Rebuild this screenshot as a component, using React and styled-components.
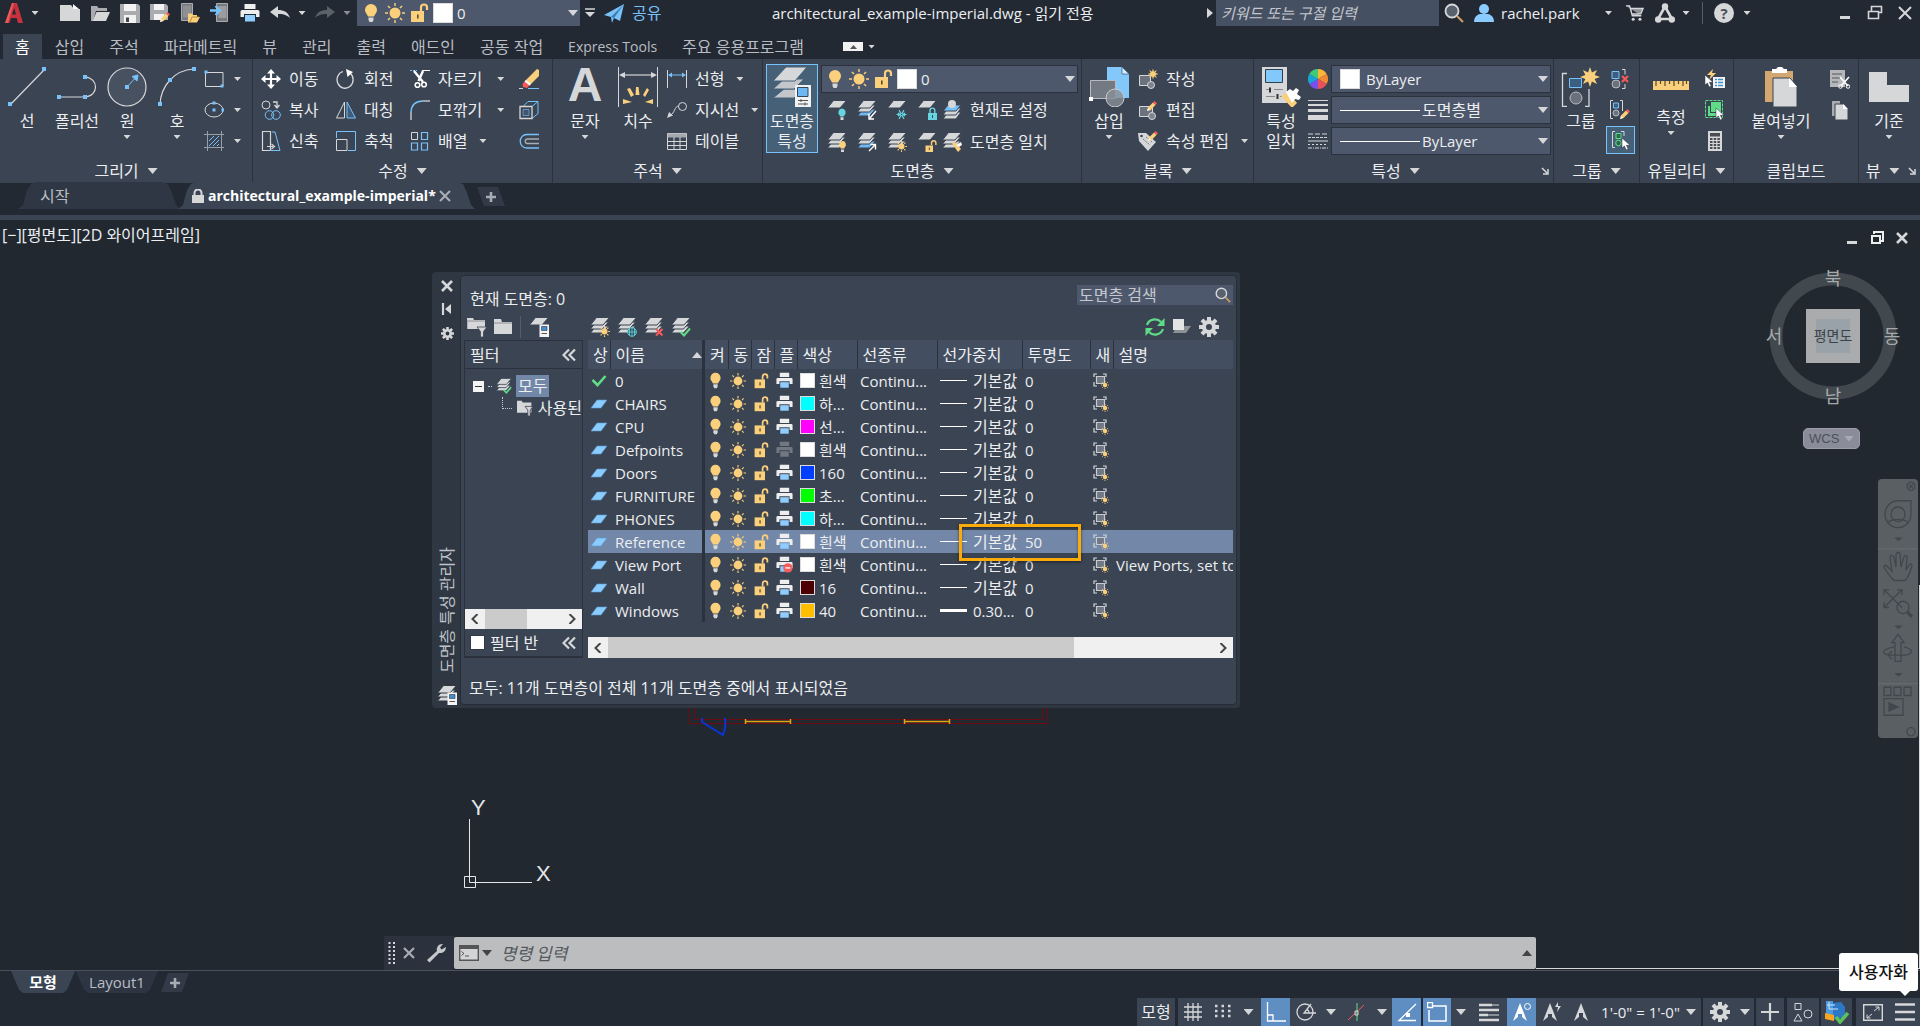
import { useState } from "react";
import styled, { createGlobalStyle, css } from "styled-components";

const c = {
  bar: "#222933",
  canvas: "#212830",
  panel: "#3b4453",
  field: "#4d586c",
  head: "#444e61",
  line: "#2b323d",
  text: "#eceef0",
  dim: "#b9bdc3",
  gray: "#d6d7d9",
  blue: "#78c2fb",
  yellow: "#fbd07c",
  teal: "#66d5e0",
  green: "#5fdc86",
  red: "#fa5a5a",
  select: "#7388a8",
};

const GlobalStyle = createGlobalStyle`
  * { box-sizing: border-box; }
  body {
    margin: 0;
    background: ${c.bar};
    color: ${c.text};
    font-family: "Open Sans", "Noto Sans CJK KR", sans-serif;
    font-size: 15px;
    line-height: 20px;
  }
  button, input, select {
    font: inherit;
    color: inherit;
    background: none;
    border: 0;
    padding: 0;
    margin: 0;
  }
  button { white-space: nowrap; cursor: pointer; }
`;

/* ---------- icons ---------- */
const Icon = ({ size = 20, h, box = 20, boxH, children }) => (
  <svg
    width={size}
    height={h || size}
    viewBox={`0 0 ${box} ${boxH || box}`}
    fill="none"
    stroke="none"
    aria-hidden="true"
    style={{ flex: "none", display: "block" }}
  >
    {children}
  </svg>
);

const rays = (cx, cy, r1, r2, n = 8) =>
  Array.from({ length: n }, (_, i) => {
    const a = (i * 2 * Math.PI) / n;
    return `M${cx + r1 * Math.cos(a)} ${cy + r1 * Math.sin(a)}L${cx + r2 * Math.cos(a)} ${cy + r2 * Math.sin(a)}`;
  }).join("");

const starPath = (cx, cy, r1, r2, n = 8) =>
  Array.from({ length: n * 2 }, (_, i) => {
    const a = (i * Math.PI) / n;
    const r = i % 2 ? r2 : r1;
    return `${i ? "L" : "M"}${cx + r * Math.cos(a)} ${cy + r * Math.sin(a)}`;
  }).join("") + "Z";

const Bulb = ({ size = 20 }) => (
  <Icon size={size}>
    <path d="M10 1a6 6 0 0 0-6 6c0 2.600 2 3.800 3 6.500h6c1-2.700 3-3.900 3-6.500a6 6 0 0 0-6-6z" fill={c.yellow} />
    <path d="M7.500 14.500h5v2.500l-1 2h-3l-1-2z" fill={c.gray} />
  </Icon>
);
const Sun = ({ size = 20 }) => (
  <Icon size={size}>
    <circle cx="10" cy="10" r="5.500" fill={c.yellow} />
    <path d={rays(10, 10, 7, 10)} stroke={c.yellow} strokeWidth="1.400" />
  </Icon>
);
const Unlock = ({ size = 20 }) => (
  <Icon size={size}>
    <path d="M2 8h13v11H2z" fill={c.yellow} />
    <path d="M12 8V4.500a3 3 0 0 1 6 0V7" stroke={c.yellow} strokeWidth="2.200" />
    <path d="M8 11.500h1.600v4H8z" fill="#5b4a2c" />
  </Icon>
);
const Printer = ({ size = 20, off, ban }) => (
  <Icon size={size}>
    <g opacity={off ? 0.45 : 1}>
      <path d="M4.500 1h11v5h-11zM2 7h16q1.500 0 1.500 1.500V14H16v-3H4v3H.500V8.500Q.500 7 2 7z" fill={off ? "#b5b8bc" : "#eee"} />
      <path d="M5 12h10v6.500H5z" fill={off ? "#b5b8bc" : "#8fccff"} />
    </g>
    {ban && (
      <g>
        <circle cx="14" cy="14" r="5.500" fill="#f25c5c" />
        <path d="M11 14h6" stroke="#fff" strokeWidth="1.500" />
      </g>
    )}
  </Icon>
);

const Stack = ({ fills = [c.gray, c.gray, c.gray], bg = c.panel, one }) => (
  <g stroke={bg} strokeWidth="1">
    {!one && <path d="M6 9h12.500L12.500 16H.500z" fill={fills[2]} />}
    {!one && <path d="M6 5h12.500l-6 7H.500z" fill={fills[1]} />}
    <path d="M6.500 .500h13L13 8H.500z" fill={fills[0]} />
  </g>
);

const badges = {
  bulb: (
    <g>
      <path d="M15 8.500a3.800 3.800 0 0 0-2.200 6.800v1.200h4.400v-1.200A3.800 3.800 0 0 0 15 8.500z" fill={c.teal} />
      <path d="M13.500 17.200h3V20h-3z" fill={c.gray} />
    </g>
  ),
  bulbOn: (
    <g>
      <path d="M15.500 9a3.600 3.600 0 0 0-2 6.500v1h4v-1a3.600 3.600 0 0 0-2-6.500z" fill={c.yellow} />
      <path d="M14 17.500h3V20h-3z" fill={c.gray} />
    </g>
  ),
  snow: <path d={rays(14.5, 14.5, 0.5, 5, 6) + "M11 13l2 1.500-2 1.500M18 13l-2 1.500 2 1.500"} stroke={c.teal} strokeWidth="1.200" />,
  globe: (
    <g stroke={c.teal}>
      <circle cx="15" cy="15" r="4.300" fill="#33505f" />
      <path d="M10.700 15h8.600M15 10.700v8.600M12.500 11.500v7M17.500 11.500v7" strokeWidth=".8" />
    </g>
  ),
  lock: (
    <g>
      <path d="M11 13h9v7h-9z" fill={c.teal} />
      <path d="M13 13v-2.500a2.400 2.400 0 0 1 4.800 0V13" stroke={c.teal} strokeWidth="1.400" />
      <path d="M15 15h1v3h-1z" fill="#24535a" />
    </g>
  ),
  unlock: (
    <g>
      <path d="M8.500 13.500H16V20H8.500z" fill={c.yellow} />
      <path d="M14.500 13v-2a2.200 2.200 0 0 1 4.400 0v2" stroke={c.yellow} strokeWidth="1.400" />
      <path d="M11.800 15.500h1v2.500h-1z" fill="#5b4a2c" />
    </g>
  ),
  sun: (
    <g>
      <circle cx="14.500" cy="14.500" r="3" fill={c.yellow} />
      <path d={rays(14.5, 14.5, 3.8, 5.5)} stroke={c.yellow} strokeWidth="1.100" />
    </g>
  ),
  x: <path d="M12 12l6.500 6.500M18.500 12L12 18.500" stroke={c.red} strokeWidth="2" />,
  check: <path d="M9.500 15l3.500 3.500 6-7" stroke={c.green} strokeWidth="2" />,
  arrowIn: <path d="M19 11l-6 7M12 13.500V19h5" stroke="#fff" strokeWidth="1.400" />,
  arrowOut: <path d="M12 19l6-6M13.500 12.500h5v5" stroke="#fff" strokeWidth="1.400" />,
  brush: (
    <g>
      <path d="M10 11.500l3-1.500 6 7-3 3z" fill={c.yellow} />
      <path d="M14 13l5-3 1 3-3 2z" fill="#fff" />
    </g>
  ),
  card: (
    <g>
      <path d="M10.500 7.500H20V20h-9.500z" fill="#f4f4f4" />
      <path d="M12.500 9.500H18v4h-5.500z" fill="#3f8fce" stroke="#334" strokeWidth=".6" />
      <path d="M12.500 16.500H18" stroke="#555" />
    </g>
  ),
};

const LayerIcon = ({ badge, size = 20, one, fills, bg }) => (
  <Icon size={size}>
    <Stack one={one} fills={fills} bg={bg} />
    {badges[badge]}
  </Icon>
);

const dot = (x, y, s = 4) => <rect x={x - s / 2} y={y - s / 2} width={s} height={s} fill={c.blue} />;
const pencil = (x, y) => (
  <g transform={`translate(${x} ${y})`}>
    <path d="M0 10l1-3.500L6 1.500l2.500 2.500-5 5z" fill={c.yellow} />
    <path d="M6 1.500L7.500 0 10 2.500 8.500 4z" fill={c.red} />
    <path d="M0 10l1-3 2 2z" fill="#f4f4f4" />
  </g>
);
const pointer = (x, y) => (
  <path transform={`translate(${x} ${y})`} d="M0 0v10l2.400-2 1.800 4 2-1-1.800-3.700H8z" fill="#fff" stroke="#2c333e" strokeWidth=".5" />
);

const icons = {
  logo: (
    <Icon size={22} box={22}>
      <path d="M2 21L9 1h5l6 20h-5l-1.200-5H8l-1.500 5zM9 12.500h4L11.300 6z" fill="#c8323c" />
      <path d="M2 21L9 1h2L5 21z" fill="#e35a5f" />
    </Icon>
  ),
  newFile: <Icon><path d="M0 2h11l3 4h6v12H0z" fill={c.gray} /><path d="M13 1l6 5h-6z" fill="#f8f8f8" /></Icon>,
  open: <Icon><path d="M1 18V3h6l1.500 2H17v3H6L3 18z" fill="#a9abae" /><path d="M6.500 9H20l-4 9H2.500z" fill={c.gray} /></Icon>,
  save: <Icon><path d="M0 1h18l2 2v17H0z" fill="#a9abae" /><path d="M4 1h12v7H4zM4 12h12v8H4z" fill="#f2f2f2" /><path d="M6 14.500h3V19H6z" fill="#444" /></Icon>,
  saveAs: (
    <Icon>
      <path d="M0 1h16l2 2v14H0z" fill="#a9abae" />
      <path d="M4 1h10v6H4zM4 11h10v6H4z" fill="#f2f2f2" />
      {pencil(10, 9)}
    </Icon>
  ),
  openWeb: <Icon><path d="M1.500 .500h11v17h-11z" fill="#77797d" stroke="#a9abae" /><path d="M3 2.500h8v12H3z" fill="#8e9094" /><path d="M8 19.500v-9h4l1 1.500h4v2h3l-3 5.500z" fill={c.yellow} /><path d="M10 19l2-5h7" stroke="#b98c3c" /></Icon>,
  saveWeb: <Icon><path d="M6.500 .500h11v18h-11z" fill="#77797d" stroke="#a9abae" /><path d="M8.500 3h8v12h-8z" fill="#9a9ca0" /><path d="M0 7.500h9M5.500 3L10 7.500 5.500 12" stroke={c.blue} strokeWidth="2.400" /></Icon>,
  undo: <Icon><path d="M0 9l8-6v4c6 0 10 2 12 8-4-3.500-7-4-12-4v4z" fill={c.gray} /></Icon>,
  redo: <Icon><path d="M20 9l-8-6v4C6 7 2 9 0 15c4-3.500 7-4 12-4v4z" fill="#5b6169" /></Icon>,
  menuMore: <Icon size={12} box={12}><path d="M1 2h10" stroke={c.gray} strokeWidth="1.500" /><path d="M1 5h10l-5 5z" fill={c.gray} /></Icon>,
  plane: <Icon><path d="M0 12L20 1l-4 17-6-3-2 5-1-6z" fill={c.blue} /><path d="M7 14L20 1 10 15z" fill="#3f7aa8" /></Icon>,
  magnifier: <Icon><circle cx="8" cy="8" r="6.500" fill="#59616e" stroke={c.gray} strokeWidth="1.800" /><path d="M13 13l6 6" stroke="#c99a63" strokeWidth="2.200" /></Icon>,
  user: <Icon><circle cx="10" cy="6" r="5" fill="#8accff" /><path d="M0 19c0-6 4-7.500 6-8h8c2 .500 6 2 6 8z" fill="#8accff" /></Icon>,
  cart: <Icon size={18}><path d="M0 2h4l3 11h10M5 5h14l-2.500 6H6.500z" stroke={c.gray} strokeWidth="1.500" fill="#8c9097" /><circle cx="8" cy="17" r="1.700" fill={c.gray} /><circle cx="15.500" cy="17" r="1.700" fill={c.gray} /></Icon>,
  triangle: <Icon><path d="M10 3.500L3 16h14z" stroke={c.gray} strokeWidth="2.600" /><circle cx="10" cy="3.500" r="3.200" fill={c.gray} /><circle cx="3.200" cy="16.500" r="3.200" fill={c.gray} /><circle cx="16.800" cy="16.500" r="3.200" fill={c.gray} /></Icon>,
  min: <Icon size={14} box={14}><path d="M2 10h10v3H2z" fill={c.gray} /></Icon>,
  restore: <Icon size={16} box={16}><path d="M4.500 6.500V1.500h10v6h-3M1.500 6.500h10v7h-10z" stroke={c.gray} strokeWidth="1.600" /></Icon>,
  close: <Icon size={14} box={14}><path d="M1 1l12 12M13 1L1 13" stroke={c.gray} strokeWidth="2" /></Icon>,
  line: <Icon size={40} box={40}><path d="M3 38L37 3" stroke={c.gray} strokeWidth="1.200" />{dot(3, 37)}{dot(37, 2)}</Icon>,
  polyline: <Icon size={40} box={40}><path d="M2 30h26M28 30c14-1 14-19 0-20" stroke={c.gray} strokeWidth="1.200" />{dot(2, 30)}{dot(28, 30)}{dot(28, 10)}</Icon>,
  circle: <Icon size={40} box={40}><circle cx="20" cy="20" r="19" stroke={c.gray} strokeWidth="1.200" fill="#485160" /><path d="M20 20L30 9M25 9.500l6-1.500-1 6z" stroke={c.blue} fill={c.blue} />{dot(20, 20)}</Icon>,
  arc: <Icon size={40} box={40}><path d="M3 37C4 20 16 3 37 2" stroke={c.gray} strokeWidth="1.200" />{dot(3, 37)}{dot(13, 13)}{dot(37, 2)}</Icon>,
  rect: <Icon><path d="M1.500 4v13.500H19M1.500 3.500H19V17" stroke={c.gray} />{dot(2, 3, 3)}{dot(18, 17, 3)}</Icon>,
  ellipse: <Icon><ellipse cx="10" cy="10" rx="9" ry="7" stroke={c.gray} />{dot(10, 10, 3)}{dot(10, 3, 3)}{dot(19, 10, 3)}</Icon>,
  hatch: <Icon><path d="M3.500 0v20M17.500 0v20M0 3.500h20M0 16.500h20" stroke="#999fa8" /><path d="M5 10l5-5M5 15L15 5M9 15l6-6M13 15l2-2" stroke={c.blue} /></Icon>,
  move: <Icon><path d="M10 2v16M2 10h16" stroke="#fff" strokeWidth="2.200" /><path d="M10 0l4 4.500H6zM10 20l4-4.500H6zM0 10l4.500-4v8zM20 10l-4.500-4v8z" fill="#fff" /></Icon>,
  copy: <Icon><circle cx="5" cy="5" r="4" stroke={c.gray} /><path d="M12 2h4v5M13.500 5L16 8l2.500-3" stroke={c.gray} strokeWidth="1.300" /><circle cx="8.500" cy="15" r="4.300" stroke={c.blue} /><circle cx="15" cy="15" r="4.300" stroke={c.blue} /></Icon>,
  stretch: <Icon><path d="M1.500.500h8v19h-8zM6 15.500h6M10.500 13l3 2.500-3 2.500" stroke={c.gray} strokeWidth="1.200" /><path d="M11 1h3l5 18.500H9" stroke={c.blue} /></Icon>,
  rotate: <Icon><path d="M14 4a8 8.500 0 1 1-7-1.500" stroke={c.gray} strokeWidth="1.300" /><path d="M10 0l7 3-5.500 5z" fill="#fff" /></Icon>,
  mirror: <Icon><path d="M8.500 2v16H.500z" stroke={c.gray} /><path d="M11 2l8.500 16H11z" stroke={c.blue} fill="#3f5d78" /></Icon>,
  scale: <Icon><path d="M.500 7V.500h19v19H12" stroke={c.blue} /><path d="M.500 8.500h10.500v11H.500z" stroke={c.gray} /></Icon>,
  trim: <Icon><path d="M0 1.500h7" stroke={c.blue} strokeDasharray="2 1" /><path d="M12 1.500h8" stroke="#fff" /><path d="M4 2l9 11M13 2L8.500 12" stroke="#fff" strokeWidth="2.400" /><circle cx="7.500" cy="16" r="2.300" stroke="#fff" strokeWidth="1.600" /><circle cx="14" cy="15.500" r="2.300" stroke="#fff" strokeWidth="1.600" /></Icon>,
  fillet: <Icon><path d="M1 20v-8" stroke={c.gray} strokeWidth="1.300" /><path d="M1 12C1.500 5 5 1 13 1" stroke={c.blue} strokeWidth="1.500" /><path d="M13 1h7" stroke={c.gray} strokeWidth="1.300" /></Icon>,
  array: <Icon><path d="M1.500 1.500h6v7h-6z" stroke={c.gray} /><path d="M11.500 1.500h6v7h-6zM1.500 12h6v7h-6zM11.500 12h6v7h-6z" stroke={c.blue} strokeWidth="1.200" /></Icon>,
  erase: <Icon><path d="M18 0l2 1v6l-9 9-5-4z" fill={c.yellow} /><path d="M6 12l5 4-3 3-4-1-.500-3z" fill={c.red} /><path d="M7 11l5 4-1.500 1.500-5-4z" fill="#fff" /><path d="M0 19.500h4" stroke={c.gray} /><path d="M9 19.500h11" stroke={c.blue} /></Icon>,
  explode: <Icon><path d="M4 6.500L9 1.500h10v12l-6 5z" stroke={c.blue} /><path d="M1 6.500h12v12H1z" stroke={c.gray} strokeWidth="1.300" fill={c.panel} /><path d="M13 6.500l6-5" stroke={c.blue} /><path d="M4 9.500h6v6H4z" fill="#40566e" stroke={c.blue} strokeWidth=".6" /></Icon>,
  offset: <Icon><path d="M20 3.500H8C-1 3.500-1 17 8 17h12" stroke={c.blue} strokeWidth="1.300" /><path d="M20 8H8.500c-3 0-3 4.500 0 4.500H20" stroke="#a8adb4" strokeWidth="1.300" /></Icon>,
  dim: (
    <Icon size={40} box={40}>
      <path d="M.500 0v40M39.500 0v40" stroke={c.gray} />
      <path d="M4 8h32" stroke={c.gray} strokeWidth="1.200" />
      <path d="M1 8l6-3v6zM39 8l-6-3v6z" fill={c.gray} />
      <path d="M18 20l2.500 0 1 8h-4zM9 22l3-1 4 7-3 2zM29 21l2 2-4 7-2-2zM5 32l9 3-9 2zM35 32l-8 3 8 2z" fill={c.yellow} />
    </Icon>
  ),
  linear: <Icon><path d="M.500 1v18M19.500 1v18" stroke={c.gray} /><path d="M3 6h14" stroke={c.blue} /><path d="M1 6l4-2.500v5zM19 6l-4-2.500v5z" fill={c.blue} /></Icon>,
  leader: <Icon><circle cx="15.500" cy="6.500" r="4" stroke={c.gray} /><path d="M12 6C7 6 8 14 3 15" stroke={c.gray} /><path d="M0 18l2-6 4 3.500z" fill={c.gray} /></Icon>,
  table: <Icon><path d="M.500 2.500h19v16H.500z" stroke={c.gray} /><path d="M.500 2.500h19v4H.500z" fill="#a5a9af" /><path d="M.500 10.500h19M.500 14.500h19M7 6v12M13 6v12" stroke={c.gray} /></Icon>,
  layerProps: (
    <Icon size={40} box={40}>
      <path d="M12 22h20l-10 9H1z" fill="#c3c7cb" stroke="#466078" />
      <path d="M12 12h20l-10 10H1z" fill="#c3c7cb" stroke="#466078" />
      <path d="M14 0h21L23 14H1z" fill={c.gray} stroke="#466078" />
      <path d="M23 18h16v22H23z" fill="#f1f2f3" />
      <path d="M25.500 20.500h10.500v9H25.500z" fill="#6db8f3" stroke="#33475a" />
      <path d="M26 33.500h10M26 37h10M29 32v3M33 35.500v3" stroke="#555" />
    </Icon>
  ),
  makeCurrent: <Icon><path d="M6 12h13l-5 7H1z" fill={c.gray} stroke={c.panel} /><path d="M6 8h13l-5 7H1z" fill={c.gray} stroke={c.panel} /><path d="M6 5h13l-5 6H1z" fill={c.blue} stroke={c.panel} /><circle cx="10" cy="4" r="4" fill={c.gray} /></Icon>,
  insert: (
    <Icon size={40} box={40}>
      <path d="M18 0h15l7 7v24H18z" fill="#83c8fb" />
      <path d="M33 0v7h7z" fill="#d5ecff" stroke="#3b5a77" strokeWidth=".7" />
      <path d="M1.500 13.500h25v18h-25z" fill="#747a83" stroke="#b8bbc0" />
      <circle cx="26" cy="31" r="9" fill="#8a9097" fillOpacity=".8" stroke="#c9cbce" />
      <path d="M0 30h4v4H0z" fill="#fff" />
    </Icon>
  ),
  blockNew: <Icon><path d="M1.500 6.500h11v10h-11z" fill="#6b727d" stroke={c.gray} /><circle cx="13" cy="16" r="3.500" fill="#7d848e" stroke={c.gray} /><path d={starPath(15, 5, 5.5, 2.5)} fill={c.yellow} /></Icon>,
  blockEdit: <Icon><path d="M1.500 6.500h13v10h-13z" fill="#6b727d" stroke={c.gray} /><circle cx="14" cy="16" r="3.500" fill="#7d848e" stroke={c.gray} />{pencil(9, 1)}</Icon>,
  attrEdit: <Icon><path d="M0 2l8 0 10 9-8 9L1 10z" fill={c.gray} /><path d="M5 8l7 6M8 6l6 5" stroke="#777" strokeDasharray="2 1" /><circle cx="3.500" cy="5" r="1.300" fill={c.panel} />{pencil(10, 0)}</Icon>,
  matchProps: (
    <Icon size={40} box={40}>
      <path d="M1 0h25v36H1z" fill={c.gray} />
      <path d="M4.500 2.500h17v13h-17z" fill="#83c8fb" stroke="#2e3f4d" />
      <path d="M5 22.500h4M13 22.500h9M5 29.500h9M19 29.500h4" stroke="#888" />
      <path d="M9 20.500v5M16.500 27v5" stroke="#333" strokeWidth="2" />
      <path d="M20 29l7-4 9 11-5 5z" fill={c.yellow} />
      <path d="M25 25l4-3 3 2 3-3 3 2-2 4 4 3-2 3-4-1-3 4z" fill="#fff" />
    </Icon>
  ),
  wheel: (
    <Icon>
      {["#fcb53b", "#f28a34", "#e8505b", "#7a4ff0", "#1aa3d8", "#3ecb78"].map((f, i) => {
        const a = ((i * 60 - 90) * Math.PI) / 180;
        const b = ((i * 60 - 30) * Math.PI) / 180;
        return <path key={f} fill={f} d={`M10 10L${10 + 10 * Math.cos(a)} ${10 + 10 * Math.sin(a)}A10 10 0 0 1 ${10 + 10 * Math.cos(b)} ${10 + 10 * Math.sin(b)}Z`} />;
      })}
    </Icon>
  ),
  weights: <Icon><path d="M0 0h20v1H0zM0 4h20v2H0zM0 9h20v3H0zM0 15h20v5H0z" fill={c.gray} /></Icon>,
  dashes: <Icon><path d="M0 3h20" stroke={c.gray} strokeDasharray="5 2" /><path d="M0 6.500h20" stroke={c.gray} strokeDasharray="3 1" /><path d="M0 10h20" stroke={c.gray} /><path d="M0 13.500h20" stroke={c.gray} strokeDasharray="2 2" /><path d="M0 17h20" stroke={c.gray} strokeDasharray="4 1 1 1" /></Icon>,
  group: (
    <Icon size={40} box={40}>
      <path d="M6 6.500H1.500v33H6M24 39.500h4V22" stroke={c.gray} strokeWidth="1.300" />
      <path d="M8.500 11.500h12v9h-12z" fill="#3b5f80" stroke={c.blue} />
      <circle cx="15" cy="31" r="6" fill="#6b727d" stroke="#b8bbc0" />
      <path d={starPath(29, 10, 10, 5)} fill={c.yellow} />
    </Icon>
  ),
  ungroup: <Icon><path d="M2 2.500h7v7H2z" fill="#3b5f80" stroke={c.blue} /><circle cx="6" cy="15" r="4" fill="#6b727d" stroke="#b8bbc0" /><path d="M12 .500h3v5M15 15v4.500h-3" stroke={c.gray} /><path d="M12 7l6 6M18 7l-6 6" stroke={c.red} strokeWidth="2" /></Icon>,
  groupEdit: <Icon><path d="M3 .500H.500v18H3M10 .500h2.500V11" stroke={c.gray} /><path d="M3.500 3h5v5h-5z" fill="#3b5f80" stroke={c.blue} /><circle cx="6" cy="13" r="3" fill="#6b727d" stroke="#b8bbc0" />{pencil(10, 9)}</Icon>,
  groupSel: <Icon><path d="M4 1.500H1.500v16H4M10 1.500h3V6" stroke={c.gray} /><path d="M5 3.500h5v5H5z" fill="#2c6a4b" stroke={c.green} /><circle cx="7.500" cy="13" r="2.800" fill="#2c6a4b" stroke={c.green} />{pointer(11, 8)}</Icon>,
  ruler: <Icon size={36} box={36}><path d="M0 14h36v9H0z" fill={c.yellow} /><path d="M3 14v5M7.500 14v3M12 14v5M16.500 14v3M21 14v5M25.500 14v3M30 14v5M33.500 14v3" stroke="#5b4a2c" strokeWidth="1.200" /></Icon>,
  quickSel: <Icon><path d="M8 0L2 6h4l-2 5 7-7H7z" fill={c.yellow} /><path d="M8 8h12v11H8z" fill="#f4f4f4" /><path d="M10 10.500h2M10 13.500h2M10 16.500h2M13 10.500h5M13 13.500h5M13 16.500h5" stroke="#3f8fce" strokeWidth="1.300" />{pointer(0, 6)}</Icon>,
  selectAll: <Icon><path d="M.500.500h17v17H.500z" stroke={c.green} strokeDasharray="3 1" /><path d="M6 2h10v10H6z" fill={c.green} /><path d="M3 6v10h9v-3H5V6z" fill={c.green} />{pointer(11, 8)}</Icon>,
  calc: <Icon><path d="M3 0h14v20H3z" fill={c.gray} /><path d="M5 2h10v3.500H5z" fill="#4a4d52" /><path d="M5 8h10M5 11h10M5 14h10M5 17h10" stroke="#4a4d52" strokeWidth="2" strokeDasharray="2.500 1.200" /></Icon>,
  paste: (
    <Icon size={40} box={40}>
      <path d="M4 4h28v31H4z" fill="#d2a870" />
      <path d="M11 6V2h4l2-2h4l2 2h3v4z" fill="#fff" />
      <path d="M12 11h17l7 8v21H12z" fill={c.gray} stroke={c.panel} />
      <path d="M28 11l8 9h-8z" fill="#fff" />
    </Icon>
  ),
  cut: <Icon><path d="M0 1h15v17H0z" fill="#b5b7ba" /><path d="M2 5h10M2 9h8M2 13h6" stroke="#555" /><path d="M10 8l8 9M19 8l-8 9" stroke="#fff" strokeWidth="1.600" /><circle cx="10.500" cy="17.500" r="1.800" stroke="#fff" /><circle cx="18" cy="17.500" r="1.800" stroke="#fff" /></Icon>,
  copyClip: <Icon><path d="M2 1h8v15H2z" fill="#a9abae" /><path d="M5 4h9l4 5v11H5z" fill={c.gray} stroke={c.panel} /><path d="M13 4l5 5h-5z" fill="#fff" /></Icon>,
  base: <Icon size={40} box={40}><path d="M0 5h18v13h22v17H0z" fill={c.gray} /></Icon>,
  launcher: <Icon size={8} box={8}><path d="M1 1l5 5M7 2v5H2" stroke={c.gray} strokeWidth="1.500" /></Icon>,
  lockSmall: <Icon size={14} box={14}><path d="M1 6h12v8H1z" fill={c.gray} /><path d="M3.500 6V4a3.500 3.500 0 0 1 7 0v2" stroke={c.gray} strokeWidth="2" /></Icon>,
  smallX: <Icon size={12} box={12}><path d="M1 1l10 10M11 1L1 11" stroke="#a8acb3" strokeWidth="2.200" /></Icon>,
  palX: <Icon size={12} box={12}><path d="M1 1l10 10M11 1L1 11" stroke={c.gray} strokeWidth="2.600" /></Icon>,
  plus: <Icon size={12} box={12}><path d="M6 1v10M1 6h10" stroke="#a8acb3" strokeWidth="2.600" /></Icon>,
  autoHide: <Icon size={12} box={12}><path d="M2 0v12" stroke={c.gray} strokeWidth="2.200" /><path d="M4 6l6-5v10z" fill={c.gray} /></Icon>,
  folderFilter: <Icon><path d="M0 1h6l1 2h11v9H0z" fill={c.gray} /><path d="M0 12V4h18" stroke="#8c9097" /><path d="M10 10h10l-3.500 4.500V20h-3v-5.500z" fill={c.gray} stroke={c.panel} strokeWidth=".8" /></Icon>,
  folder: <Icon><path d="M1 2h7l1 3h10v12H1z" fill={c.gray} /><path d="M1 6h18" stroke="#8c9097" /></Icon>,
  usedFilter: <Icon size={16}><path d="M0 1h6l1 2h11v13H0z" fill={c.gray} /><path d="M10 8h10l-3.500 4.500V20h-3v-7.500z" fill={c.gray} stroke={c.panel} /></Icon>,
  refresh: <Icon><path d="M2 8a8.300 8 0 0 1 14-3M18 12a8.300 8 0 0 1-14 3" stroke={c.green} strokeWidth="2.200" /><path d="M19.500 1v8h-7.500zM.500 19v-8H8z" fill={c.green} /></Icon>,
  objects: <Icon><path d="M1 16l4-7h14l-5 7z" fill="#8c9097" /><path d="M1 2h11v11H1z" fill="#e2e3e4" /></Icon>,
  dblLeft: <Icon size={14} box={14}><path d="M7 1.500L1.500 7 7 12.500M13 1.500L7.500 7l5.500 5.500" stroke={c.gray} strokeWidth="2.200" /></Icon>,
  check: <Icon size={16} box={16}><path d="M1.500 7l5 5L14.500 3" stroke={c.green} strokeWidth="2.600" /></Icon>,
  status: <Icon size={16} box={16}><path d="M6 4h10l-6 8H0z" fill="#8accff" stroke="#5b9bd0" strokeWidth=".6" /></Icon>,
  vpFreeze: <Icon size={16} box={16}><path d="M1 4V1h3M10 1h3v3M1 9v4h3" stroke={c.gray} strokeWidth="1.200" /><path d="M3.500 3.500h8v7h-8z" fill="#707885" stroke="#c9cbce" strokeWidth="1.200" /><circle cx="12" cy="12" r="2.200" fill={c.yellow} /><path d={rays(12, 12, 2.8, 4)} stroke={c.yellow} strokeWidth=".8" /></Icon>,
  wrench: <Icon><path d="M1 17L11 8c-1-4 2-7.500 6-7l-3 3.500 1.500 2L20 4c0 4-3 6.500-7 6L3.500 19.500z" fill="#c5c7c9" /></Icon>,
  prompt: <Icon size={20} h={16} boxH={16}><path d="M.700.700h18.600v14.600H.700z" fill="#d3d4d5" stroke="#555" strokeWidth="1.400" /><path d="M0 0h20v4H0z" fill="#555" /><path d="M2.500 6.500L5 8.500l-2.500 2M6 11h4" stroke="#555" /></Icon>,
  grips: <Icon size={8} h={22} box={8} boxH={22}><path d="M1.500 0v22M6 0v22" stroke={c.gray} strokeWidth="2" strokeDasharray="2 2" /></Icon>,
  grid: <Icon><path d="M5 1v18M10 1v18M15 1v18M1 5h18M1 10h18M1 15h18" stroke={c.gray} strokeWidth="1.300" /></Icon>,
  dots: <Icon><path d="M3 4h16M3 9h16M3 14h16" stroke={c.gray} strokeWidth="2.500" strokeDasharray="2.500 4" /></Icon>,
  ortho: <Icon><path d="M1.500 0v19H20M1.500 13H7v6" stroke="#fff" strokeWidth="1.300" /></Icon>,
  polar: <Icon><circle cx="9" cy="10" r="8" stroke={c.gray} strokeWidth="1.300" /><path d="M20 11H8l7-9M11 8c2 0 2 2 1.500 3" stroke={c.gray} strokeWidth="1.300" /></Icon>,
  iso: <Icon><path d="M2 18L18 3" stroke={c.red} /><path d="M11 1v18" stroke={c.green} /><path d="M9 9h3v4H9z" stroke={c.gray} /></Icon>,
  otrack: <Icon><path d="M19 2L2 18.500h17" stroke="#fff" strokeWidth="1.300" /><path d="M9 11h4v4H9z" fill="#fff" /></Icon>,
  osnap: <Icon><path d="M6 4h13v15H2V8" stroke="#fff" strokeWidth="1.500" /><path d="M.500.500h5v5h-5z" stroke="#fff" strokeWidth="1.300" /></Icon>,
  lineWt: <Icon><path d="M0 3h13M0 8h20M0 13h9M0 18h20" stroke={c.gray} strokeWidth="2.600" /><path d="M13 3h7M9 13h11" stroke={c.gray} /></Icon>,
  anno: <Icon><path d="M9 1l7 18-5-4V11H7v4l-5 4z" fill={c.gray} /></Icon>,
  annoOn: <Icon><path d="M8 1l7 18-5-4V12H6v3l-5 4z" fill="#fff" /><circle cx="15.500" cy="4.500" r="3" stroke="#fff" /></Icon>,
  annoAuto: <Icon><path d="M8 1l7 18-5-4V12H6v3l-5 4z" fill={c.gray} /><path d="M16 0l-3 5h3l-1 5 4-6h-3z" fill={c.gray} /></Icon>,
  bigPlus: <Icon><path d="M10 1v18M1 10h18" stroke={c.gray} strokeWidth="2.200" /></Icon>,
  shapes: <Icon><path d="M2 1.500h6v6H2zM5 12l4 7H1z" stroke={c.gray} /><circle cx="15" cy="12" r="4" stroke={c.gray} /></Icon>,
  hardware: <Icon size={24} box={24}><path d="M1 1h7v14H1z" fill="#4c9ae0" /><path d="M8 3l8-1 4 5v10l-12 3z" fill="#2d78c4" /><path d="M0 13l9 2v6l-9-2z" fill="#f5a623" /><path d="M11 17l4 5 8-9" stroke="#5cc15c" strokeWidth="3.500" /><path d="M4 2v7h9M2 5h8" stroke="#cde5fa" /></Icon>,
  full: <Icon><path d="M.700 2.700h18.600v15.600H.700z" stroke={c.gray} strokeWidth="1.400" /><path d="M11 9l5-4M12.500 5H16v3.500M9 12l-5 4M7.500 16H4v-3.500" stroke={c.gray} /></Icon>,
  burger: <Icon><path d="M0 2.500h20M0 10h20M0 17.500h20" stroke={c.gray} strokeWidth="2.400" /></Icon>,
};

const Gear = ({ size = 20 }) => (
  <Icon size={size}>
    <path d={rays(10, 10, 6, 10)} stroke={c.gray} strokeWidth="4" />
    <circle cx="10" cy="10" r="5" stroke={c.gray} strokeWidth="4" />
  </Icon>
);

/* ---------- shared parts ---------- */
const Caret = styled.span`
  flex: none;
  width: ${(p) => (p.$big ? 10 : 7)}px;
  height: ${(p) => (p.$big ? 6 : 4)}px;
  background: ${(p) => p.$color || c.gray};
  clip-path: polygon(0 0, 100% 0, 50% 100%);
  ${(p) => p.$up && "transform: rotate(180deg);"}
  ${(p) => p.$right && "transform: rotate(-90deg);"}
`;

const Slot = styled.button`
  flex: none;
  width: ${(p) => p.$w || 30}px;
  height: ${(p) => p.$h || 26}px;
  display: flex;
  align-items: center;
  justify-content: center;
`;

const Swatch = styled.span`
  flex: none;
  width: ${(p) => p.$s || 20}px;
  height: ${(p) => p.$s || 20}px;
  background: ${(p) => p.$color || "#fff"};
  border: 1px solid #dcdcdc;
`;

const Combo = styled.div`
  display: flex;
  align-items: center;
  gap: ${(p) => p.$gap || 6}px;
  height: ${(p) => p.$h || 28}px;
  padding: 0 2px 0 ${(p) => p.$pl || 8}px;
  background: ${c.field};
  border: ${(p) => (p.$flat ? 0 : 1)}px solid ${c.line};
  select {
    flex: 1;
    min-width: 0;
    height: 100%;
    appearance: none;
    outline: none;
    font-size: ${(p) => (p.$ko ? 16 : 15)}px;
  }
`;

/* ---------- title bar ---------- */
const TitleBar = styled.header`
  display: flex;
  align-items: center;
  height: 26px;
  margin-bottom: 8px;
`;
const QuickAccess = styled.div`
  display: flex;
  margin-left: 13px;
`;
const QuickLayer = styled(Combo)`
  width: 223px;
  margin-left: 4px;
`;
const Share = styled.button`
  display: flex;
  align-items: center;
  gap: 8px;
  margin-left: 4px;
  color: ${c.blue};
  font-size: 16px;
`;
const DocTitle = styled.div`
  flex: 1;
  text-align: center;
  white-space: nowrap;
  overflow: hidden;
`;
const Search = styled.input`
  width: 223px;
  height: 26px;
  padding: 0 5px;
  background: #465063;
  font-style: italic;
  outline: none;
  &::placeholder { color: #c5c8cd; opacity: 1; }
`;
const User = styled.button`
  display: flex;
  align-items: center;
  gap: 7px;
  width: 150px;
  padding: 0 7px 0 5px;
  span:last-child { margin-left: auto; }
`;
const Divider = styled.span`
  width: 1px;
  height: 22px;
  background: #555d6a;
`;
const HelpMark = styled.span`
  width: 20px;
  height: 20px;
  border-radius: 50%;
  background: ${c.gray};
  color: #4a4f57;
  font-weight: 700;
  text-align: center;
`;
const WindowButtons = styled.div`
  display: flex;
  margin-left: 73px;
`;

const Title = () => (
  <TitleBar>
    <Slot $w={28} aria-label="AutoCAD">{icons.logo}</Slot>
    <Slot $w={14} aria-label="메뉴"><Caret /></Slot>
    <QuickAccess>
      {["newFile", "open", "save", "saveAs", "openWeb", "saveWeb"].map((n) => (
        <Slot key={n} aria-label={n}>{icons[n]}</Slot>
      ))}
      <Slot aria-label="print"><Printer /></Slot>
      <Slot aria-label="undo">{icons.undo}</Slot>
      <Slot $w={14} aria-label="undo list"><Caret /></Slot>
      <Slot $w={32} aria-label="redo">{icons.redo}</Slot>
      <Slot $w={12} aria-label="redo list"><Caret $color="#8a8f97" /></Slot>
    </QuickAccess>
    <QuickLayer $flat $pl={4} $gap={4} $h={26}>
      <Bulb /><Sun /><Unlock /><Swatch />
      <select aria-label="도면층"><option>0</option></select>
      <Caret $big />
    </QuickLayer>
    <Slot $w={20} aria-label="사용자화">{icons.menuMore}</Slot>
    <Share>{icons.plane}공유</Share>
    <DocTitle>architectural_example-imperial.dwg - 읽기 전용</DocTitle>
    <Slot $w={12} aria-label="확장"><Caret $right $big /></Slot>
    <Search placeholder="키워드 또는 구절 입력" aria-label="검색" />
    <Slot aria-label="찾기">{icons.magnifier}</Slot>
    <User>{icons.user}rachel.park<Caret /></User>
    <Slot $w={32} aria-label="cart">{icons.cart}</Slot>
    <Slot $w={28} aria-label="apps">{icons.triangle}</Slot>
    <Slot $w={14} aria-label="apps list"><Caret /></Slot>
    <Slot $w={18} as="span"><Divider /></Slot>
    <Slot $w={26} aria-label="도움말"><HelpMark>?</HelpMark></Slot>
    <Slot $w={20} aria-label="help list"><Caret /></Slot>
    <WindowButtons>
      <Slot aria-label="최소화">{icons.min}</Slot>
      <Slot aria-label="복원">{icons.restore}</Slot>
      <Slot aria-label="닫기">{icons.close}</Slot>
    </WindowButtons>
  </TitleBar>
);

/* ---------- ribbon tabs ---------- */
const TabBar = styled.nav`
  display: flex;
  align-items: center;
  height: 25px;
  padding-left: 3px;
  font-size: 16px;
  color: ${c.dim};
`;
const RibbonTab = styled.button`
  height: 25px;
  padding: 0 12px 0 13px;
  &:first-child { padding-left: 12px; }
  ${(p) => p.$active && css`background: ${c.panel}; color: #fff;`}
  ${(p) => p.$latin && css`font-size: 14px;`}
`;
const RibbonToggle = styled.button`
  display: flex;
  align-items: center;
  justify-content: center;
  width: 20px;
  height: 9px;
  margin: 0 5px 0 27px;
  background: #f2f2f2;
`;

const tabs = ["홈", "삽입", "주석", "파라메트릭", "뷰", "관리", "출력", "애드인", "공동 작업", "Express Tools", "주요 응용프로그램"];

/* ---------- ribbon ---------- */
const RibbonBar = styled.div`
  display: grid;
  grid-template-columns: 253fr 300fr 210fr 319fr 172fr 300fr 86fr 94fr 125fr 61fr;
  height: 124px;
  background: ${c.panel};
  font-size: 16px;
`;
const PanelBox = styled.section`
  display: flex;
  flex-direction: column;
  min-width: 0;
  border-right: 1px solid ${c.line};
  &:last-child { border-right: 0; }
`;
const PanelBody = styled.div`
  display: flex;
  height: 98px;
  padding: 5px 0 0 ${(p) => p.$pl || 2}px;
`;
const PanelTitle = styled.button`
  display: flex;
  align-items: center;
  justify-content: center;
  gap: 9px;
  height: 26px;
  width: 100%;
  padding: 2px 4px 0 ${(p) => (p.$tight ? 7 : 4)}px;
`;
const Corner = styled.span`
  flex: 1;
  display: flex;
  justify-content: flex-end;
`;
const LaunchCorner = styled(Corner)`
  flex: 1 1 auto;
  margin-left: ${(p) => (p.$tight ? 0 : 8)}px;
`;
const BigButton = styled.button`
  flex: none;
  display: flex;
  flex-direction: column;
  align-items: center;
  width: ${(p) => p.$w || 50}px;
  height: 89px;
  padding-top: ${(p) => (p.$active ? 2 : 3)}px;
  white-space: normal;
  word-break: keep-all;
  ${(p) => p.$active && css`background: #466078; border: 1px solid ${c.blue};`}
  span:nth-child(2) { margin: 4px 0; }
`;
const Columns = styled.div`
  flex: ${(p) => (p.$fixed ? "none" : 1)};
  display: grid;
  grid-template-columns: ${(p) => p.$cols || "1fr"};
  grid-template-rows: repeat(3, 31px);
  grid-auto-flow: column;
  margin-left: ${(p) => p.$ml || 0}px;
  min-width: 0;
`;
const Tool = styled.button`
  display: flex;
  align-items: center;
  gap: 8px;
  height: 30px;
  ${Caret} { margin-left: ${(p) => p.$gap || 4}px; }
`;
const Framed = styled.button`
  display: flex;
  align-items: center;
  justify-content: center;
  width: 29px;
  height: 28px;
  margin-left: -4px;
  background: #466078;
  border: 1px solid ${c.blue};
`;
const LetterA = styled.span`
  width: 40px;
  height: 40px;
  font: 700 48px/36px "Liberation Sans", sans-serif;
  color: ${c.gray};
  text-align: center;
`;
const LayerTools = styled.div`
  flex: 1;
  display: flex;
  flex-direction: column;
  gap: 1px;
  padding: 1px 3px 0 3px;
  min-width: 0;
`;
const IconRow = styled.div`
  display: flex;
  align-items: center;
  height: 31px;
  padding-left: 1px;
`;
const PropCombos = styled.div`
  flex: 1;
  display: flex;
  flex-direction: column;
  gap: 3px;
  padding: 1px 2px 0 3px;
  min-width: 0;
`;
const Rule = styled.span`
  flex: none;
  width: ${(p) => p.$w}px;
  height: ${(p) => p.$h || 1}px;
  background: #fff;
`;

const Panel = ({ title, pl, caret = true, launcher, tight, children }) => (
  <PanelBox>
    <PanelBody $pl={pl}>{children}</PanelBody>
    <PanelTitle $tight={tight}>
      {launcher && !tight && <Corner />}
      {title}
      {caret && <Caret $big />}
      {launcher && <LaunchCorner $tight={tight}>{icons.launcher}</LaunchCorner>}
    </PanelTitle>
  </PanelBox>
);

const Big = ({ icon, label, caret, w, active }) => (
  <BigButton $w={w} $active={active}>
    {icon}
    <span>{label}</span>
    {caret && <Caret />}
  </BigButton>
);

const Small = ({ icon, label, caret, gap }) => (
  <Tool $gap={gap} aria-label={label ? undefined : icon}>
    {icons[icon]}
    {label}
    {caret && <Caret />}
  </Tool>
);

const Ribbon = () => (
  <RibbonBar>
    <Panel title="그리기">
      <Big icon={icons.line} label="선" />
      <Big icon={icons.polyline} label="폴리선" />
      <Big icon={icons.circle} label="원" caret />
      <Big icon={icons.arc} label="호" caret />
      <Columns $ml={2}>
        <Small icon="rect" caret gap={2} />
        <Small icon="ellipse" caret gap={2} />
        <Small icon="hatch" caret gap={2} />
      </Columns>
    </Panel>

    <Panel title="수정" pl={8}>
      <Columns $cols="75px 74px 109px 1fr">
        <Small icon="move" label="이동" />
        <Small icon="copy" label="복사" />
        <Small icon="stretch" label="신축" />
        <Small icon="rotate" label="회전" />
        <Small icon="mirror" label="대칭" />
        <Small icon="scale" label="축척" />
        <Small icon="trim" label="자르기" caret gap={7} />
        <Small icon="fillet" label="모깎기" caret gap={7} />
        <Small icon="array" label="배열" caret />
        <Small icon="erase" />
        <Small icon="explode" />
        <Small icon="offset" />
      </Columns>
    </Panel>

    <Panel title="주석" pl={6}>
      <Big icon={<LetterA>A</LetterA>} label="문자" caret w={52} />
      <Big icon={icons.dim} label="치수" w={54} />
      <Columns $ml={2}>
        <Small icon="linear" label="선형" caret />
        <Small icon="leader" label="지시선" caret />
        <Small icon="table" label="테이블" />
      </Columns>
    </Panel>

    <Panel title="도면층" pl={3}>
      <Big icon={icons.layerProps} label="도면층 특성" w={52} active />
      <LayerTools>
        <Combo $pl={3} $gap={4}>
          <Bulb /><Sun /><Unlock /><Swatch />
          <select aria-label="현재 도면층"><option>0</option></select>
          <Caret $big />
        </Combo>
        <IconRow>
          <Slot aria-label="끄기"><LayerIcon one badge="bulb" /></Slot>
          <Slot aria-label="분리"><LayerIcon fills={[c.gray, c.gray, "#6fb7f0"]} badge="arrowIn" /></Slot>
          <Slot aria-label="동결"><LayerIcon one badge="snow" /></Slot>
          <Slot aria-label="잠금"><LayerIcon one badge="lock" /></Slot>
          <Small icon="makeCurrent" label="현재로 설정" />
        </IconRow>
        <IconRow>
          <Slot aria-label="켜기"><LayerIcon badge="bulbOn" /></Slot>
          <Slot aria-label="분리 해제"><LayerIcon fills={[c.gray, c.gray, "#6fb7f0"]} badge="arrowOut" /></Slot>
          <Slot aria-label="동결 해제"><LayerIcon badge="sun" /></Slot>
          <Slot aria-label="잠금 해제"><LayerIcon one badge="unlock" /></Slot>
          <Tool><LayerIcon badge="brush" />도면층 일치</Tool>
        </IconRow>
      </LayerTools>
    </Panel>

    <Panel title="블록">
      <Big icon={icons.insert} label="삽입" caret />
      <Columns $ml={4}>
        <Small icon="blockNew" label="작성" />
        <Small icon="blockEdit" label="편집" />
        <Small icon="attrEdit" label="속성 편집" caret />
      </Columns>
    </Panel>

    <Panel title="특성" pl={2} launcher>
      <Big icon={icons.matchProps} label="특성 일치" w={50} />
      <Columns $cols="20px" $ml={2} $fixed>
        <Small icon="wheel" />
        <Small icon="weights" />
        <Small icon="dashes" />
      </Columns>
      <PropCombos>
        <Combo>
          <Swatch />
          <select aria-label="객체 색상"><option>ByLayer</option></select>
          <Caret $big />
        </Combo>
        <Combo $gap={2} $ko>
          <Rule $w={80} />
          <select aria-label="선가중치"><option>도면층별</option></select>
          <Caret $big />
        </Combo>
        <Combo $gap={2}>
          <Rule $w={80} />
          <select aria-label="선종류"><option>ByLayer</option></select>
          <Caret $big />
        </Combo>
      </PropCombos>
    </Panel>

    <Panel title="그룹">
      <Big icon={icons.group} label="그룹" />
      <Columns $ml={4}>
        <Small icon="ungroup" />
        <Small icon="groupEdit" />
        <Framed aria-label="그룹 선택">{icons.groupSel}</Framed>
      </Columns>
    </Panel>

    <Panel title="유틸리티" pl={6}>
      <Big icon={icons.ruler} label="측정" caret />
      <Columns $ml={9}>
        <Small icon="quickSel" />
        <Small icon="selectAll" />
        <Small icon="calc" />
      </Columns>
    </Panel>

    <Panel title="클립보드" pl={16} caret={false}>
      <Big icon={icons.paste} label="붙여넣기" caret w={62} />
      <Columns $ml={18}>
        <Small icon="cut" />
        <Small icon="copyClip" />
      </Columns>
    </Panel>

    <Panel title="뷰" pl={5} launcher tight>
      <Big icon={icons.base} label="기준" caret />
    </Panel>
  </RibbonBar>
);

/* ---------- file tabs ---------- */
const FileTabs = styled.nav`
  display: flex;
  align-items: flex-end;
  height: 37px;
  padding: 0 0 6px 18px;
  border-bottom: 5px solid ${c.panel};
`;
const FileTab = styled.button`
  display: flex;
  align-items: center;
  gap: 3px;
  height: 27px;
  width: ${(p) => p.$w}px;
  padding: 0 24px 0 ${(p) => (p.$active ? 13 : 22)}px;
  margin-left: ${(p) => (p.$active ? -2 : 0)}px;
  background: ${(p) => (p.$active ? c.panel : "#2f3744")};
  color: ${(p) => (p.$active ? "#fff" : c.dim)};
  font-size: ${(p) => (p.$active ? 14 : 16)}px;
  font-weight: ${(p) => (p.$active ? 700 : 400)};
  clip-path: polygon(0 100%, 5px 85%, 9px 30%, 13px 7%, 18px 0, calc(100% - 18px) 0, calc(100% - 12px) 7%, calc(100% - 8px) 40%, calc(100% - 4px) 85%, 100% 100%);
  svg:last-child:not(:first-child) { margin-left: auto; }
`;
const AddTab = styled.button`
  display: flex;
  align-items: center;
  justify-content: center;
  width: 28px;
  height: 19px;
  margin: ${(p) => (p.$flip ? "2px 0 0 2px" : "0 0 3px 2px")};
  background: #323a47;
  clip-path: ${(p) =>
    p.$flip ? "polygon(0 100%, 7px 0, 100% 0, calc(100% - 7px) 100%)" : "polygon(0 0, calc(100% - 7px) 0, 100% 100%, 7px 100%)"};
`;

/* ---------- drawing area ---------- */
const Canvas = styled.main`
  position: relative;
  flex: 1;
  min-height: 751px;
  background: ${c.canvas};
  border-bottom: 1px solid #4a515c;
`;
const ViewLabel = styled.button`
  padding: 5px 2px;
  font-size: 16px;
`;
const ViewButtons = styled.div`
  position: absolute;
  top: 9px;
  right: 6px;
  display: flex;
`;
const Walls = styled.svg`
  position: absolute;
  left: 689px;
  top: 486px;
`;
const Ucs = styled.svg`
  position: absolute;
  left: 462px;
  top: 572px;
  font: 22px "Liberation Sans", sans-serif;
`;
const Cube = styled.svg`
  position: absolute;
  right: 17px;
  top: 46px;
  font-size: 18px;
`;
const Wcs = styled.button`
  position: absolute;
  top: 208px;
  right: 60px;
  display: flex;
  align-items: center;
  justify-content: space-between;
  width: 57px;
  height: 21px;
  padding: 0 5px;
  border-radius: 5px;
  background: #8a8c99;
  border: 1px solid #9b9dab;
  color: #4c505b;
  font: 13px "Liberation Sans", sans-serif;
`;
const NavBar = styled.div`
  position: absolute;
  top: 259px;
  right: 2px;
  width: 40px;
  height: 259px;
  border-radius: 4px;
  background: #5a5f63;
`;
const EdgeLine = styled.span`
  position: absolute;
  right: 0;
  bottom: 1px;
  background: #d5d7d8;
  ${(p) => (p.$vertical ? "top: 365px; width: 1px;" : "left: 80%; height: 1px;")}
`;

const Navigation = () => (
  <NavBar>
    <svg width="40" height="259" viewBox="0 0 40 250" preserveAspectRatio="none" fill="none" stroke="#42474c" strokeWidth="1.300" aria-hidden="true">
      <circle cx="33" cy="7" r="4" />
      <path d="M31 5l4 4M35 5l-4 4" />
      <path d="M20 21h13v13a13 13 0 1 1-13-13z" />
      <circle cx="20" cy="34" r="7" />
      <path d="M10 42c4-4 16-4 20 0" />
      <path d="M0 67.500h40M0 197.500h40" stroke="#666b6f" />
      <path d="M16 98c-4-4-8-9-10-13 0-2 2-2 3-1l5 5-2-13c0-3 3-3 4 0l2 9 0-12c1-3 4-3 4 0l1 12 3-10c1-2 4-1 3 1l-1 12 3-5c1-2 3-1 3 1-2 5-3 11-7 14z" />
      <path d="M6 107l18 17M24 107L6 124M6 112v-5h5M19 107h5v5M6 119v5h5" />
      <circle cx="25" cy="124" r="6" />
      <path d="M29 128l5 5" strokeWidth="3" />
      <path d="M17 176v-18h-3l6-8 6 8h-3v18z" />
      <path d="M16 162c-14 3-13 7-4 8h16c8-2 7-6-2-8M14 166l-4 4 4 4" />
      <path d="M6 201h7v8H6zM16 201h7v8h-7zM26 201h7v8h-7zM6 212h19v16H6z" />
      <path d="M11 216l9 4-9 4zM18 57h5l-2.500 2zM18 142h5l-2.500 2zM18 188h5l-2.500 2z" fill="#42474c" />
      <circle cx="33" cy="244" r="4" />
    </svg>
  </NavBar>
);

const ViewCube = () => (
  <Cube width="140" height="150" aria-label="ViewCube">
    <circle cx="70" cy="70" r="57" fill="none" stroke="#41484e" strokeWidth="13" />
    <rect x="43" y="43" width="54" height="54" fill="#a9abad" />
    <rect x="53" y="53" width="34" height="34" fill="#9aa2a9" />
    <g fill="#a6aaac" textAnchor="middle">
      <text x="70" y="19">북</text>
      <text x="70" y="137">남</text>
      <text x="11" y="77">서</text>
      <text x="129" y="77">동</text>
      <text x="70" y="75" fill="#3c4248" fontSize="14">평면도</text>
    </g>
  </Cube>
);

/* ---------- layer palette ---------- */
const Palette = styled.section`
  position: absolute;
  left: 22.5%;
  top: 52px;
  display: flex;
  width: 808px;
  height: 436px;
  padding: 3px 3px 3px 0;
  background: #2f3743;
  border-radius: 4px;
  font-size: 16px;
`;
const Grip = styled.div`
  display: flex;
  flex-direction: column;
  align-items: center;
  width: 28px;
  padding: 0 0 0 2px;
`;
const GripTitle = styled.span`
  margin: auto 0 12px;
  writing-mode: vertical-rl;
  text-orientation: sideways;
  transform: rotate(180deg);
  color: #bfc3c9;
`;
const Content = styled.div`
  flex: 1;
  min-width: 0;
  padding: 0 3px;
  background: ${c.panel};
  border: 1px solid #262d37;
  border-radius: 4px;
`;
const Row = styled.div`
  display: flex;
  align-items: center;
  height: ${(p) => p.$h}px;
`;
const Current = styled.div`
  flex: 1;
  padding: 9px 0 0 6px;
`;
const LayerSearch = styled.label`
  display: flex;
  align-items: center;
  width: 156px;
  height: 20px;
  padding: 0 2px;
  background: ${c.field};
  svg { width: 16px; height: 16px; }
  input {
    flex: 1;
    min-width: 0;
    outline: none;
    &::placeholder { color: #c5c8cd; opacity: 1; }
  }
`;
const Spacer = styled.span`
  flex: ${(p) => (p.$w ? `0 0 ${p.$w}px` : 1)};
`;
const Body = styled.div`
  display: grid;
  grid-template-columns: 119px minmax(0, 1fr);
  column-gap: 5px;
  height: 318px;
`;
const Side = styled.aside`
  display: flex;
  flex-direction: column;
  border: 1px solid ${c.line};
  min-width: 0;
`;
const SideHead = styled.div`
  display: flex;
  align-items: center;
  justify-content: space-between;
  height: 28px;
  padding: 0 6px 0 5px;
  border-bottom: 1px solid ${c.line};
`;
const Tree = styled.ul`
  flex: 1;
  margin: 0;
  padding: 6px 0 0 8px;
  list-style: none;
  overflow: hidden;
  white-space: nowrap;
`;
const Node = styled.li`
  display: flex;
  align-items: center;
  gap: ${(p) => (p.$child ? 5 : 4)}px;
  height: 22px;
  padding-left: ${(p) => (p.$child ? 29 : 0)}px;
  strong {
    padding: 1px 2px;
    background: ${c.select};
    font-weight: 400;
  }
`;
const Expander = styled.button`
  display: flex;
  align-items: center;
  justify-content: center;
  width: 11px;
  height: 11px;
  background: #f4f4f4;
  &::after { content: ""; width: 7px; height: 1px; background: #333; }
`;
const Dots = styled.span`
  width: ${(p) => p.$w}px;
  height: ${(p) => (p.$corner ? 12 : 1)}px;
  border-bottom: 1px dotted #c5c8cd;
  ${(p) => p.$corner && css`border-left: 1px dotted #c5c8cd; align-self: flex-start;`}
`;
const Scrollbar = styled.div`
  display: flex;
  align-items: center;
  height: ${(p) => p.$h || 21}px;
  background: #f0f0f0;
  button { flex: none; width: 20px; height: 100%; display: flex; align-items: center; justify-content: center; }
`;
const Track = styled.div`
  flex: 1;
  height: 100%;
  div { width: ${(p) => p.$thumb}; height: 100%; background: #cbcbcb; }
`;
const Invert = styled.label`
  display: flex;
  align-items: center;
  gap: 5px;
  input {
    appearance: none;
    width: 15px;
    height: 15px;
    background: #fff;
    border: 1px solid #333a45;
  }
`;
const TableWrap = styled.div`
  display: flex;
  flex-direction: column;
  justify-content: space-between;
  min-width: 0;
`;
const LayerTable = styled.table`
  width: 100%;
  table-layout: fixed;
  border-collapse: collapse;
  th {
    height: 29px;
    padding: 0 0 0 5px;
    overflow: hidden;
    background: ${c.head};
    border-right: 1px solid ${c.line};
    font-weight: 400;
    text-align: left;
    white-space: nowrap;
    &:last-child { border-right: 0; }
  }
  td {
    height: 23px;
    padding: 0 0 0 3px;
    white-space: nowrap;
    font-size: 15px;
  }
`;
const TableRow = styled.tr`
  background: ${(p) => (p.$selected ? c.select : "transparent")};
`;
const Gap = styled.td`
  && { padding: 0; background: ${c.line}; border-right: 0; }
`;
const IconCell = styled.td`
  && { padding-left: 2px; }
`;
const NameCell = styled.td`
  && { padding-left: 5px; }
`;
const Flex = styled.span`
  display: flex;
  align-items: center;
  gap: ${(p) => p.$gap || 4}px;
  height: 20px;
  overflow: hidden;
  ${(p) => p.$ko && css`font-size: 16px;`}
`;
const Marked = styled.td`
  position: relative;
`;
const Mark = styled.span`
  position: absolute;
  z-index: 1;
  left: 22px;
  top: -6px;
  width: 122px;
  height: 37px;
  border: 3px solid #fbab08;
  box-shadow: 0 1px 3px rgba(0, 0, 0, 0.5), inset 0 1px 3px rgba(0, 0, 0, 0.4);
`;
const Summary = styled.div`
  padding: 20px 0 0 5px;
`;

const layers = [
  { name: "0", color: "#fff", colorName: "흰색", current: true },
  { name: "CHAIRS", color: "#00ffff", colorName: "하..." },
  { name: "CPU", color: "#ff00ff", colorName: "선..." },
  { name: "Defpoints", color: "#fff", colorName: "흰색", plot: "off" },
  { name: "Doors", color: "#003fff", colorName: "160" },
  { name: "FURNITURE", color: "#00ff00", colorName: "초..." },
  { name: "PHONES", color: "#00ffff", colorName: "하..." },
  { name: "Reference", color: "#fff", colorName: "흰색", alpha: "50", selected: true },
  { name: "View Port", color: "#fff", colorName: "흰색", plot: "ban", note: "View Ports, set to" },
  { name: "Wall", color: "#4c0000", colorName: "16" },
  { name: "Windows", color: "#ffbf00", colorName: "40", weight: "0.30..." },
];

const columns = [22, 92, 3, 23, 23, 23, 23, 60, 80, 85, 68, 23, 120];

const Chevron = ({ left }) => (
  <Icon size={10} box={10}>
    <path d={left ? "M7.500 0L2.500 5l5 5" : "M2.500 0l5 5-5 5"} stroke="#444" strokeWidth="2" />
  </Icon>
);

const HScroll = ({ thumb, h }) => (
  <Scrollbar $h={h}>
    <button aria-label="왼쪽"><Chevron left /></button>
    <Track $thumb={thumb}><div /></Track>
    <button aria-label="오른쪽"><Chevron /></button>
  </Scrollbar>
);

const LayerPalette = () => {
  const [invert, setInvert] = useState(false);

  return (
    <Palette>
      <Grip>
        <Slot $w={24} $h={21} aria-label="닫기">{icons.palX}</Slot>
        <Slot $w={24} $h={25} aria-label="자동 숨기기">{icons.autoHide}</Slot>
        <Slot $w={24} $h={24} aria-label="특성"><Gear size={13} /></Slot>
        <GripTitle>도면층 특성 관리자</GripTitle>
        <LayerIcon badge="card" bg="#2f3743" />
      </Grip>
      <Content>
        <Row $h={37}>
          <Current>현재 도면층: 0</Current>
          <LayerSearch>
            <input placeholder="도면층 검색" aria-label="도면층 검색" />
            {icons.magnifier}
          </LayerSearch>
        </Row>
        <Row $h={27}>
          <Slot $w={26} aria-label="새 특성 필터">{icons.folderFilter}</Slot>
          <Slot $w={26} aria-label="새 그룹 필터">{icons.folder}</Slot>
          <Slot $w={9} as="span"><Divider /></Slot>
          <Slot $w={28} aria-label="도면층 상태"><LayerIcon one badge="card" /></Slot>
          <Spacer $w={33} />
          <Slot $w={27} aria-label="새 도면층"><LayerIcon badge="sun" /></Slot>
          <Slot $w={27} aria-label="동결된 새 도면층"><LayerIcon badge="globe" /></Slot>
          <Slot $w={27} aria-label="삭제"><LayerIcon badge="x" /></Slot>
          <Slot $w={27} aria-label="현재로"><LayerIcon badge="check" /></Slot>
          <Spacer />
          <Slot $w={27} aria-label="갱신">{icons.refresh}</Slot>
          <Slot $w={27} aria-label="재지정">{icons.objects}</Slot>
          <Slot $w={27} aria-label="설정"><Gear /></Slot>
          <Spacer $w={11} />
        </Row>
        <Body>
          <Side>
            <SideHead>필터<button aria-label="필터 접기">{icons.dblLeft}</button></SideHead>
            <Tree>
              <Node>
                <Expander aria-label="접기" />
                <Dots $w={4} />
                <LayerIcon size={16} badge="check" />
                <strong>모두</strong>
              </Node>
              <Node $child>
                <Dots $w={11} $corner />
                {icons.usedFilter}
                사용된
              </Node>
            </Tree>
            <HScroll h={20} thumb="55%" />
            <SideHead>
              <Invert>
                <input type="checkbox" checked={invert} onChange={() => setInvert(!invert)} />
                필터 반
              </Invert>
              <button aria-label="접기">{icons.dblLeft}</button>
            </SideHead>
          </Side>
          <TableWrap>
            <LayerTable>
              <colgroup>
                {columns.map((w, i) => (
                  <col key={i} style={{ width: w }} />
                ))}
              </colgroup>
              <thead>
                <tr>
                  <th>상</th>
                  <th><Flex>이름<Spacer /><Caret $up $big /></Flex></th>
                  <Gap />
                  <th>켜</th>
                  <th>동</th>
                  <th>잠</th>
                  <th>플</th>
                  <th>색상</th>
                  <th>선종류</th>
                  <th>선가중치</th>
                  <th>투명도</th>
                  <th>새</th>
                  <th>설명</th>
                </tr>
              </thead>
              <tbody>
                {layers.map((l) => (
                  <TableRow key={l.name} $selected={l.selected}>
                    <td>{l.current ? icons.check : icons.status}</td>
                    <NameCell>{l.name}</NameCell>
                    <Gap />
                    <IconCell><Bulb size={17} /></IconCell>
                    <IconCell><Sun size={16} /></IconCell>
                    <IconCell><Unlock size={16} /></IconCell>
                    <IconCell><Printer size={17} off={l.plot === "off"} ban={l.plot === "ban"} /></IconCell>
                    <td><Flex><Swatch $s={15} $color={l.color} />{l.colorName}</Flex></td>
                    <td>Continu...</td>
                    <Marked>
                      <Flex $gap={6} $ko={!l.weight}>
                        <Rule $w={27} $h={l.weight ? 3 : 1} />
                        {l.weight || "기본값"}
                      </Flex>
                      {l.selected && <Mark />}
                    </Marked>
                    <td>{l.alpha || "0"}</td>
                    <td>{icons.vpFreeze}</td>
                    <td><Flex>{l.note}</Flex></td>
                  </TableRow>
                ))}
              </tbody>
            </LayerTable>
            <HScroll thumb="77%" />
          </TableWrap>
        </Body>
        <Summary>모두: 11개 도면층이 전체 11개 도면층 중에서 표시되었음</Summary>
      </Content>
    </Palette>
  );
};

/* ---------- command line ---------- */
const Command = styled.div`
  position: absolute;
  left: 20%;
  bottom: 0;
  display: flex;
  align-items: center;
  width: 60%;
  height: 34px;
  background: linear-gradient(to right, #2b323e 70px, ${c.canvas} 70px);
`;
const CommandField = styled.label`
  flex: 1;
  display: flex;
  align-items: center;
  gap: 3px;
  height: 32px;
  padding: 0 4px 0 5px;
  background: #bbbdbf;
  border-radius: 2px;
  input {
    flex: 1;
    padding-left: 6px;
    font-family: "Noto Sans CJK KR", sans-serif;
    font-size: 17px;
    font-style: italic;
    outline: none;
    &::placeholder { color: #55585c; opacity: 1; }
  }
`;

/* ---------- bottom bars ---------- */
const BottomRow = styled.div`
  position: relative;
  height: 27px;
`;
const LayoutTabs = styled.nav`
  display: flex;
  padding-left: 11px;
`;
const LayoutTab = styled.button`
  width: ${(p) => p.$w}px;
  height: 22px;
  margin-right: 1px;
  background: ${(p) => (p.$active ? c.panel : "#2d3542")};
  color: ${(p) => (p.$active ? "#fff" : c.dim)};
  font-weight: ${(p) => (p.$active ? 700 : 400)};
  clip-path: polygon(0 0, 100% 0, calc(100% - 8px) 85%, calc(100% - 12px) 100%, 12px 100%, 8px 85%);
`;
const StatusBar = styled.footer`
  display: flex;
  justify-content: flex-end;
  height: 28px;
`;
const StatusItem = styled.button`
  display: flex;
  align-items: center;
  justify-content: center;
  gap: 6px;
  width: ${(p) => p.$w}px;
  height: 28px;
  margin-left: ${(p) => p.$ml || 0}px;
  background: ${(p) => (p.$on ? "#5f8fc2" : c.panel)};
  ${(p) => p.$ko && css`font-size: 16px;`}
`;
const Tooltip = styled.div`
  position: absolute;
  z-index: 2;
  right: 2px;
  bottom: 7px;
  padding: 9px 10px;
  background: #fff;
  border-radius: 3px;
  color: #111;
  font-size: 16px;
  font-weight: 500;
  &::after {
    content: "";
    position: absolute;
    right: 8px;
    top: 100%;
    border: 5px solid transparent;
    border-top-color: #fff;
  }
`;

const statusItems = [
  { w: 30, ml: 3, icon: "grid" },
  { w: 28, icon: "dots" },
  { w: 25 },
  { w: 29, icon: "ortho", on: true },
  { w: 32, icon: "polar" },
  { w: 18 },
  { w: 32, icon: "iso" },
  { w: 20 },
  { w: 29, icon: "otrack", on: true },
  { w: 28, ml: 2, icon: "osnap", on: true },
  { w: 20 },
  { w: 36, icon: "lineWt" },
  { w: 29, icon: "annoOn", on: true },
  { w: 32, icon: "annoAuto" },
  { w: 28, icon: "anno" },
  { w: 105, text: "1'-0\" = 1'-0\"" },
  { w: 33, ml: 2, icon: "gear" },
  { w: 18 },
  { w: 28, ml: 2, icon: "bigPlus" },
  { w: 32, ml: 3, icon: "shapes" },
  { w: 31, ml: 2, icon: "hardware" },
  { w: 34, ml: 4, icon: "full" },
  { w: 30, icon: "burger" },
];

const Page = styled.div`
  display: flex;
  flex-direction: column;
  min-height: 100vh;
`;

export default function App() {
  const [tab, setTab] = useState("홈");

  return (
    <Page>
      <GlobalStyle />
      <Title />
      <TabBar>
        {tabs.map((t) => (
          <RibbonTab key={t} $active={t === tab} $latin={t === "Express Tools"} onClick={() => setTab(t)}>
            {t}
          </RibbonTab>
        ))}
        <RibbonToggle aria-label="리본 최소화"><Caret $up $color="#555" /></RibbonToggle>
        <Caret />
      </TabBar>
      <Ribbon />
      <FileTabs>
        <FileTab $w={162}>시작</FileTab>
        <FileTab $w={297} $active>
          {icons.lockSmall}
          architectural_example-imperial*
          {icons.smallX}
        </FileTab>
        <AddTab aria-label="새 도면">{icons.plus}</AddTab>
      </FileTabs>

      <Canvas>
        <ViewLabel>[−][평면도][2D 와이어프레임]</ViewLabel>
        <ViewButtons>
          <Slot $w={25} $h={18} aria-label="최소화">{icons.min}</Slot>
          <Slot $w={25} $h={18} aria-label="복원">
            <Icon size={14} box={14}><path d="M4 3V1h9v9h-2M2 5h8v7H2z" stroke="#eee" strokeWidth="2" /></Icon>
          </Slot>
          <Slot $w={25} $h={18} aria-label="닫기">{icons.palX}</Slot>
        </ViewButtons>
        <Walls width="360" height="40" fill="none" strokeWidth="1" aria-hidden="true">
          <path d="M.500 0v17.500h358V0M5.500 0v13.500h348V0" stroke="#6e0a12" />
          <path d="M13 12v4l21 13c2-5 3-11 2-17" stroke="#0a35d8" strokeWidth="2" />
          <path d="M56.500 15.500h45M215.500 15.500h45M56.500 13v5M101.500 13v5M215.500 13v5M260.500 13v5" stroke="#e0a414" strokeWidth="1.500" />
        </Walls>
        <Ucs width="100" height="100" fill="none" stroke="#e4e6e8" aria-label="UCS">
          <path d="M7.500 27v63.500H70" />
          <path d="M2.500 84.500h11v11h-11z" />
          <g fill="#e4e6e8" stroke="none">
            <text x="9" y="23">Y</text>
            <text x="74" y="89">X</text>
          </g>
        </Ucs>
        <ViewCube />
        <Wcs>WCS<Caret $big $color="#a9abb8" /></Wcs>
        <Navigation />
        <EdgeLine $vertical />
        <EdgeLine />
        <LayerPalette />
        <Command>
          <Slot $w={16} as="span">{icons.grips}</Slot>
          <Slot $w={18} aria-label="닫기">{icons.smallX}</Slot>
          <Slot $w={36} aria-label="사용자화">{icons.wrench}</Slot>
          <CommandField>
            {icons.prompt}
            <Caret $big $color="#444" />
            <input placeholder="명령 입력" aria-label="명령 입력" />
            <Caret $up $big $color="#444" />
          </CommandField>
        </Command>
      </Canvas>

      <BottomRow>
        <LayoutTabs>
          <LayoutTab $w={64} $active>모형</LayoutTab>
          <LayoutTab $w={82}>Layout1</LayoutTab>
          <AddTab $flip aria-label="새 배치">{icons.plus}</AddTab>
        </LayoutTabs>
        <Tooltip role="tooltip">사용자화</Tooltip>
      </BottomRow>
      <StatusBar>
        <StatusItem $w={38} $ko>모형</StatusItem>
        {statusItems.map((s, i) => (
          <StatusItem key={i} $w={s.w} $ml={s.ml} $on={s.on} aria-label={s.icon || s.text || "목록"}>
            {s.text}
            {s.icon === "gear" ? <Gear /> : icons[s.icon]}
            {!s.icon && <Caret $big />}
          </StatusItem>
        ))}
      </StatusBar>
    </Page>
  );
}
